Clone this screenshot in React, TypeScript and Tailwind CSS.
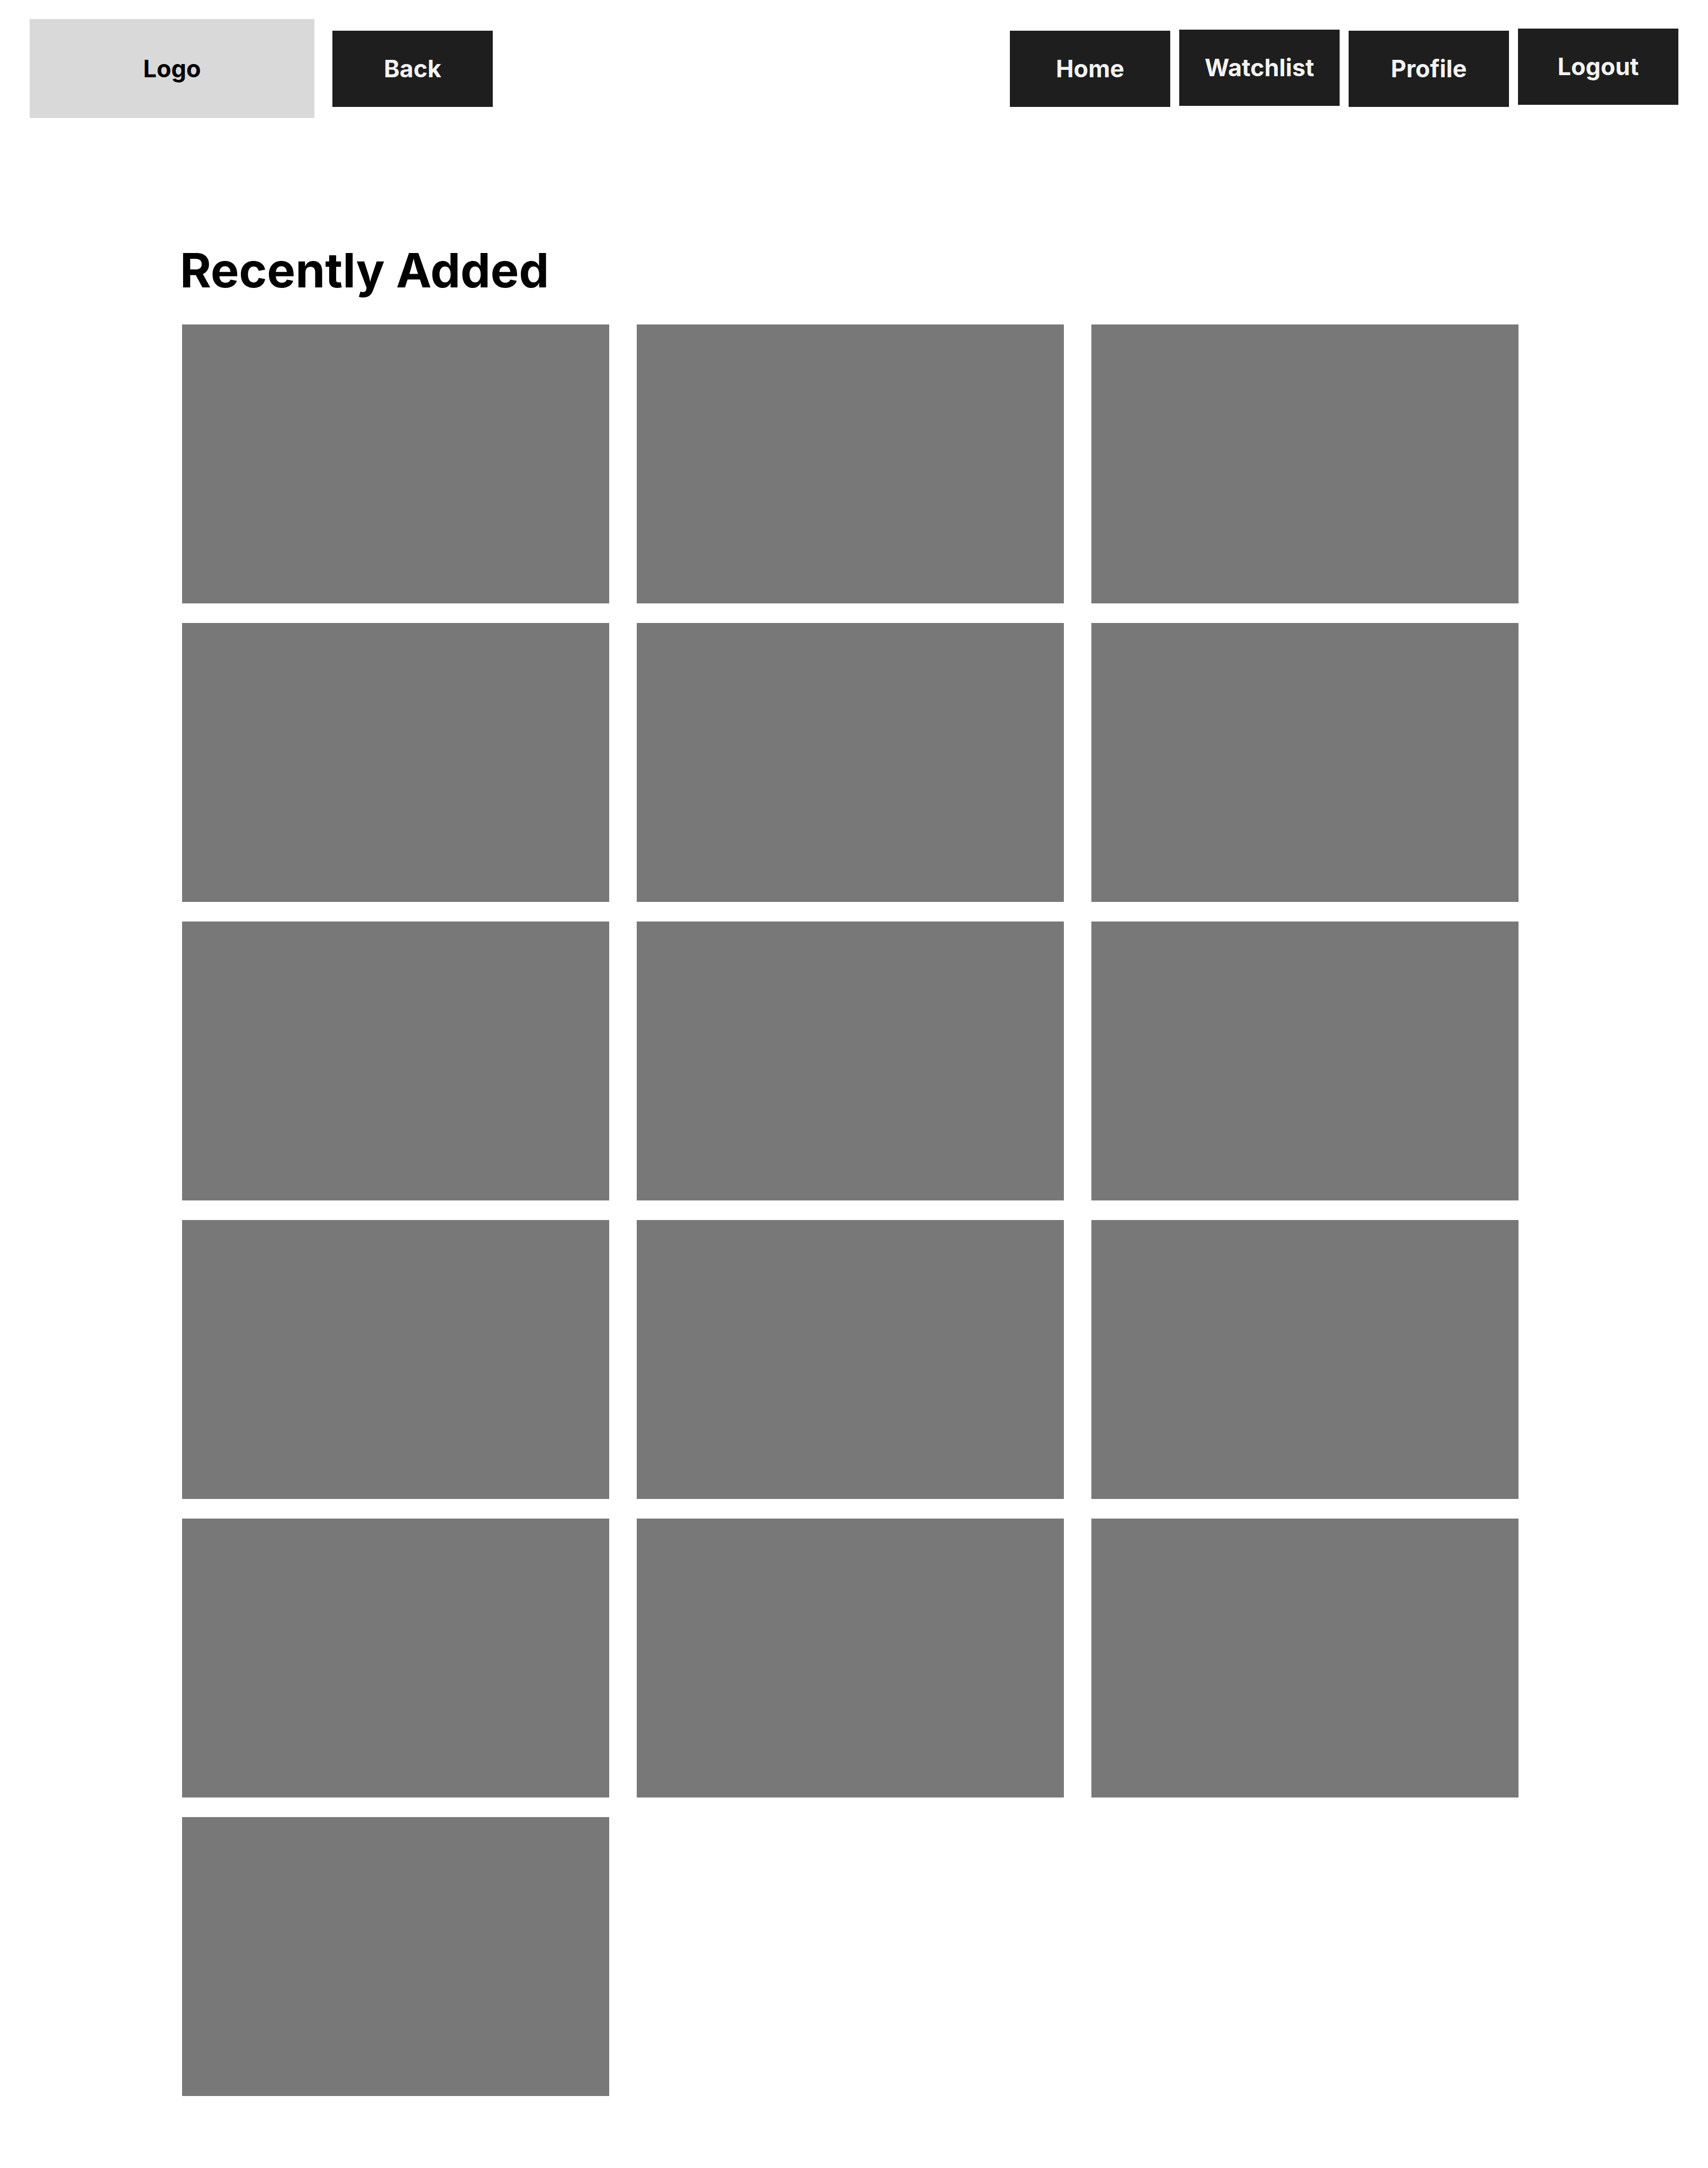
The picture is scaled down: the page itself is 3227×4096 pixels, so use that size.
const navItems = [
  { label: "Home", href: "#home", drop: "mt-1" },
  { label: "Watchlist", href: "#watchlist", drop: "mt-0.5" },
  { label: "Profile", href: "#profile", drop: "mt-1" },
  { label: "Logout", href: "#logout", drop: "mt-0" },
];

const cards = Array.from({ length: 16 }, (_, i) => i + 1);

function Header() {
  return (
    <header className="flex items-start px-14 pt-9">
      <div className="flex h-[187px] w-[538px] items-center justify-center bg-[#d9d9d9] text-[45px] font-bold text-black">
        Logo
      </div>
      <button
        type="button"
        className="mt-[22px] ml-[34px] flex h-36 w-[303px] items-center justify-center bg-[#1e1e1e] text-[45px] font-bold text-[#f3f3f3]"
      >
        Back
      </button>
      <nav aria-label="Main" className="mt-[18px] ml-auto flex items-start gap-[17px]">
        {navItems.map((item) => (
          <a
            key={item.label}
            href={item.href}
            className={`${item.drop} flex h-36 w-[303px] items-center justify-center bg-[#1e1e1e] text-[45px] font-bold text-[#f3f3f3]`}
          >
            {item.label}
          </a>
        ))}
      </nav>
    </header>
  );
}

export default function App() {
  return (
    <div className="min-h-screen bg-white font-['Inter',sans-serif]">
      <Header />
      <main className="pt-[233px] pr-[358px] pb-[136px] pl-[340px]">
        <h1 className="text-[90px] leading-[109px] font-bold text-black">Recently Added</h1>
        <ul className="mt-12 ml-1 grid grid-cols-3 gap-x-[52px] gap-y-[37px]">
          {cards.map((id) => (
            <li key={id} className="aspect-[807/527] bg-[#787878]" />
          ))}
        </ul>
      </main>
    </div>
  );
}
